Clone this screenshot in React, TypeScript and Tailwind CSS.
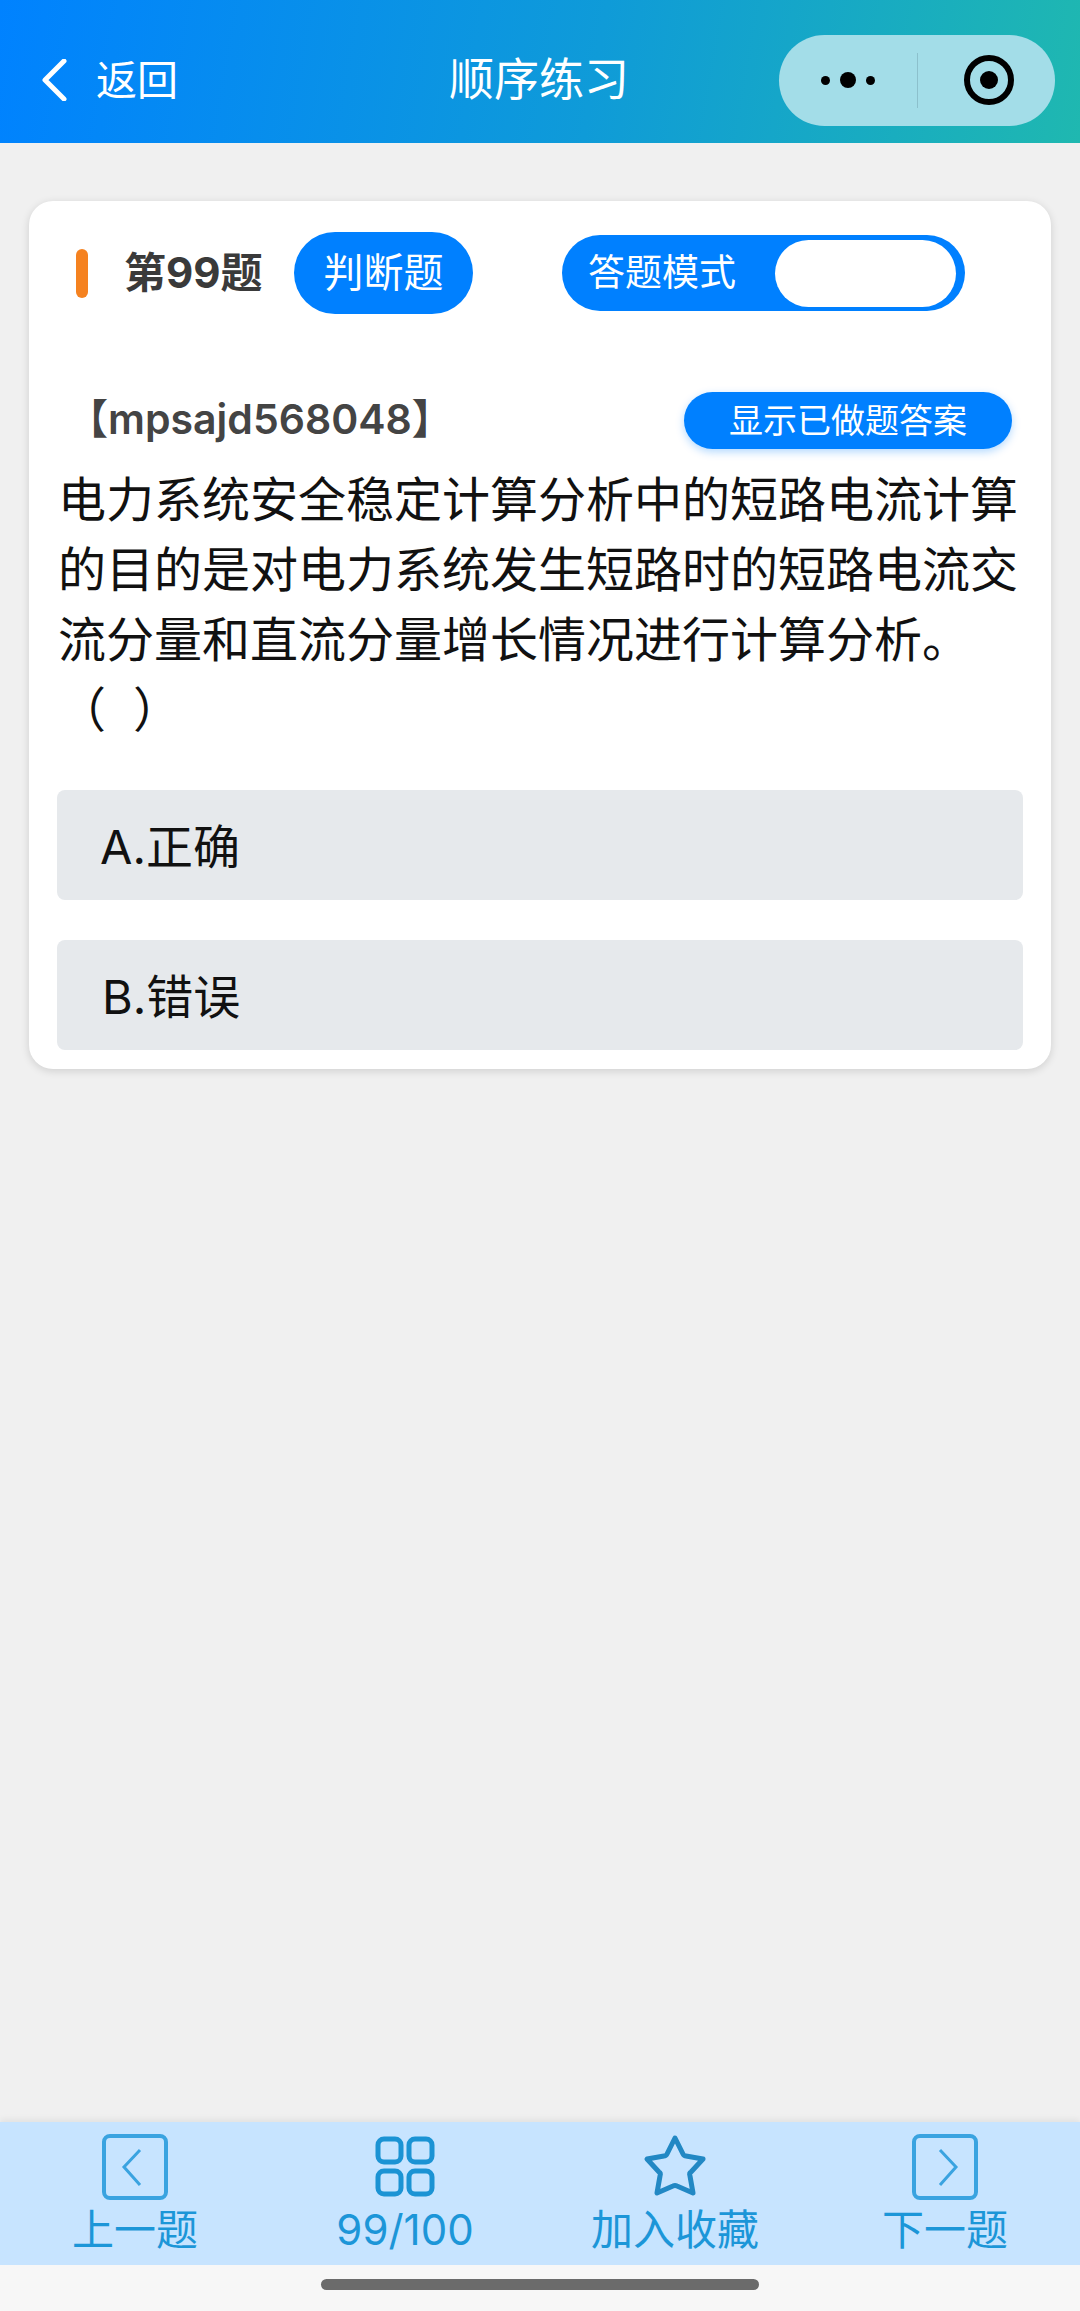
const font = { fontFamily: 'Inter, "Noto Sans CJK SC", sans-serif' }

const barLabel = 'mt-[5px] text-[42px] leading-[48px] text-[#1c96d8]'

function BoxIcon({ dir }: { dir: 'left' | 'right' }) {
  return (
    <svg width="68" height="68" viewBox="0 0 68 68" fill="none">
      <rect x="3" y="3" width="62" height="62" rx="6" stroke="#3aa3e0" strokeWidth="4" />
      <path
        d={dir === 'left' ? 'M39 17 L23 34 L39 52' : 'M29 17 L45 34 L29 52'}
        stroke="#3aa3e0"
        strokeWidth="3"
      />
    </svg>
  )
}

function GridIcon() {
  return (
    <svg width="68" height="68" viewBox="0 0 68 68" fill="none" stroke="#1b93d4" strokeWidth="5">
      <rect x="7" y="6" width="23" height="23" rx="6" />
      <rect x="38" y="6" width="23" height="23" rx="6" />
      <rect x="7" y="38" width="23" height="23" rx="6" />
      <rect x="38" y="38" width="23" height="23" rx="6" />
    </svg>
  )
}

function StarIcon() {
  return (
    <svg width="68" height="68" viewBox="0 0 68 68" fill="none">
      <path
        d="M34 5 L42 21 Q43 23 45 23 L62 26 L50 39 Q48 40 49 43 L52 60 L36 53 Q34 52 32 53 L16 60 L19 43 Q20 40 18 39 L6 26 L23 23 Q25 23 26 21 Z"
        stroke="#2288c4"
        strokeWidth="5"
        strokeLinejoin="round"
      />
    </svg>
  )
}

const tabs = [
  { label: '上一题', icon: <BoxIcon dir="left" /> },
  { label: '99/100', icon: <GridIcon /> },
  { label: '加入收藏', icon: <StarIcon /> },
  { label: '下一题', icon: <BoxIcon dir="right" /> },
]

export default function App() {
  return (
    <div className="w-[1080px] h-[2311px] flex flex-col bg-[#f0f0f0]" style={font}>
      {/* Top bar */}
      <header className="h-[143px] shrink-0 flex items-center pl-[41px] pr-[25px] pt-[17px] relative bg-[linear-gradient(100deg,#0082ff_0%,#0f9bd8_55%,#1fb8b0_100%)] text-white">
        <svg width="26" height="42" viewBox="0 0 26 42" fill="none" className="-mt-[1px]">
          <path d="M23 2 L4 21 L23 40" stroke="white" strokeWidth="5" strokeLinecap="round" strokeLinejoin="round" />
        </svg>
        <span className="ml-[29px] text-[41px] leading-[50px]">返回</span>
        <span className="absolute left-[449px] top-[55px] text-[45px] leading-[50px]">顺序练习</span>
        <div className="ml-auto w-[276px] h-[91px] rounded-full bg-[#a3dde8] flex items-center">
          <div className="w-[138px] flex items-center justify-center gap-[10px]">
            <span className="w-[9px] h-[9px] rounded-full bg-black" />
            <span className="w-[16px] h-[16px] rounded-full bg-black" />
            <span className="w-[9px] h-[9px] rounded-full bg-black" />
          </div>
          <div className="w-px h-[55px] bg-[#8cc0cc]" />
          <div className="flex-1 flex justify-center pl-[5px]">
            <div className="w-[50px] h-[50px] rounded-full border-[6px] border-black flex items-center justify-center">
              <span className="w-[18px] h-[18px] rounded-full bg-black" />
            </div>
          </div>
        </div>
      </header>

      {/* Question card */}
      <main className="mt-[58px] mx-[29px] h-[868px] rounded-[24px] bg-white shadow-[0_2px_8px_rgba(0,0,0,0.14)] px-[28px] pt-[31px]">
        <div className="flex items-center h-[82px]">
          <span className="ml-[19px] w-[12px] h-[49px] rounded-full bg-[#f58220]" />
          <span className="ml-[36px] w-[139px] -mt-[1px] text-[42px] leading-[50px] font-bold text-[#3a3a3a] whitespace-nowrap">第99题</span>
          <span className="ml-[31px] w-[179px] h-[82px] rounded-full bg-[#0080ff] text-white text-[40px] flex items-center justify-center">判断题</span>
          <div className="ml-[89px] w-[403px] h-[76px] rounded-full bg-[#0080ff] flex items-center pl-[26px] pr-[9px]">
            <span className="text-white text-[37px] whitespace-nowrap">答题模式</span>
            <span className="ml-auto w-[181px] h-[67px] rounded-full bg-white" />
          </div>
        </div>

        <div className="mt-[78px] flex items-center justify-between">
          <span className="ml-[10px] -mt-[4px] text-[41px] leading-[50px] font-semibold text-[#444444] whitespace-nowrap">【mpsajd568048】</span>
          <button className="mr-[11px] w-[328px] h-[57px] rounded-full bg-[#0080ff] text-white text-[34px] shadow-[0_3px_8px_rgba(0,128,255,0.3)]">
            显示已做题答案
          </button>
        </div>

        <p className="mt-[16px] ml-[1px] text-[48px] leading-[70px] text-[#111111]">
          电力系统安全稳定计算分析中的短路电流计算的目的是对电力系统发生短路时的短路电流交流分量和直流分量增长情况进行计算分析。
          <br />
          （&nbsp;&nbsp;）
        </p>

        <div className="mt-[45px] flex flex-col gap-[40px]">
          <div className="h-[110px] rounded-[8px] bg-[#e6e9ec] flex items-center pl-[43px] pt-[4px] text-[47px] text-[#111111]">A.正确</div>
          <div className="h-[110px] rounded-[8px] bg-[#e6e9ec] flex items-center pl-[45px] pt-[4px] text-[47px] text-[#111111]">B.错误</div>
        </div>
      </main>

      {/* Bottom actions */}
      <nav className="mt-auto h-[143px] grid grid-cols-4 bg-[#c7e4ff] pt-[11px] shadow-[0_-3px_6px_rgba(0,0,0,0.06)]">
        {tabs.map((tab) => (
          <div key={tab.label} className="flex flex-col items-center">
            {tab.icon}
            <span className={barLabel}>{tab.label}</span>
          </div>
        ))}
      </nav>

      {/* Gesture bar */}
      <div className="h-[46px] shrink-0 bg-[#f7f7f7] pt-[14px] flex justify-center">
        <div className="w-[438px] h-[11px] rounded-full bg-[#6b6b6b]" />
      </div>
    </div>
  )
}
